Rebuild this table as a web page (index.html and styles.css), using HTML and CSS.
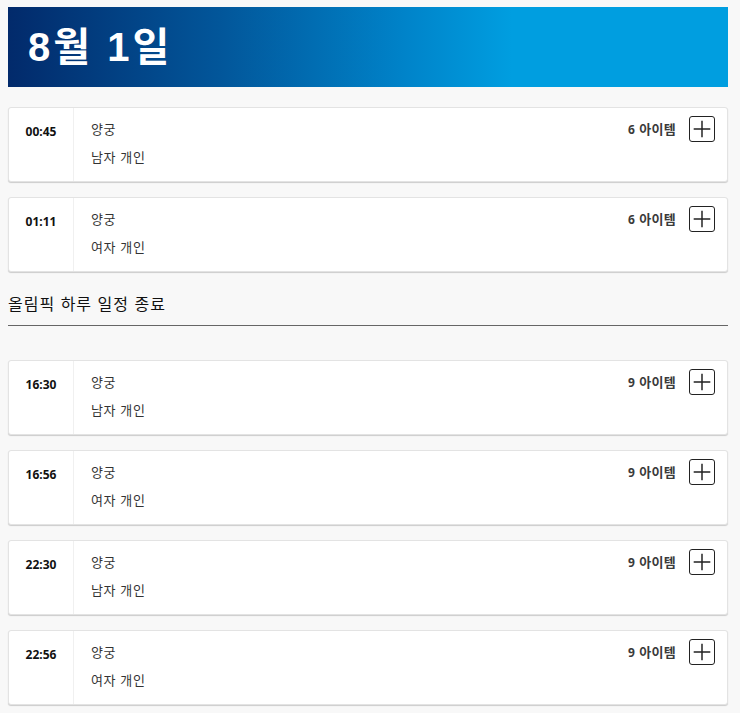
FILE: index.html
```html
<!DOCTYPE html>
<html lang="ko">
<head>
<meta charset="utf-8">
<title>8월 1일</title>
<link rel="stylesheet" href="styles.css">
</head>
<body>
<div class="page">
  <header class="day-header"><h1 class="day-title">8월 1일</h1></header>

  <div class="event">
    <div class="event-time">00:45</div>
    <div class="event-main">
      <div class="event-info">
        <div class="event-sport">양궁</div>
        <div class="event-name">남자 개인</div>
      </div>
      <div class="event-side">
        <span class="event-count"><b>6</b> 아이템</span>
        <button class="event-add" aria-label="추가"><svg viewBox="0 0 26 26" width="24" height="24"><path d="M13 4V22M4 13H22" stroke="#222" stroke-width="1.6" fill="none"/></svg></button>
      </div>
    </div>
  </div>

  <div class="event">
    <div class="event-time">01:11</div>
    <div class="event-main">
      <div class="event-info">
        <div class="event-sport">양궁</div>
        <div class="event-name">여자 개인</div>
      </div>
      <div class="event-side">
        <span class="event-count"><b>6</b> 아이템</span>
        <button class="event-add" aria-label="추가"><svg viewBox="0 0 26 26" width="24" height="24"><path d="M13 4V22M4 13H22" stroke="#222" stroke-width="1.6" fill="none"/></svg></button>
      </div>
    </div>
  </div>

  <div class="day-end">올림픽 하루 일정 종료</div>

  <div class="event">
    <div class="event-time">16:30</div>
    <div class="event-main">
      <div class="event-info">
        <div class="event-sport">양궁</div>
        <div class="event-name">남자 개인</div>
      </div>
      <div class="event-side">
        <span class="event-count"><b>9</b> 아이템</span>
        <button class="event-add" aria-label="추가"><svg viewBox="0 0 26 26" width="24" height="24"><path d="M13 4V22M4 13H22" stroke="#222" stroke-width="1.6" fill="none"/></svg></button>
      </div>
    </div>
  </div>

  <div class="event">
    <div class="event-time">16:56</div>
    <div class="event-main">
      <div class="event-info">
        <div class="event-sport">양궁</div>
        <div class="event-name">여자 개인</div>
      </div>
      <div class="event-side">
        <span class="event-count"><b>9</b> 아이템</span>
        <button class="event-add" aria-label="추가"><svg viewBox="0 0 26 26" width="24" height="24"><path d="M13 4V22M4 13H22" stroke="#222" stroke-width="1.6" fill="none"/></svg></button>
      </div>
    </div>
  </div>

  <div class="event">
    <div class="event-time">22:30</div>
    <div class="event-main">
      <div class="event-info">
        <div class="event-sport">양궁</div>
        <div class="event-name">남자 개인</div>
      </div>
      <div class="event-side">
        <span class="event-count"><b>9</b> 아이템</span>
        <button class="event-add" aria-label="추가"><svg viewBox="0 0 26 26" width="24" height="24"><path d="M13 4V22M4 13H22" stroke="#222" stroke-width="1.6" fill="none"/></svg></button>
      </div>
    </div>
  </div>

  <div class="event">
    <div class="event-time">22:56</div>
    <div class="event-main">
      <div class="event-info">
        <div class="event-sport">양궁</div>
        <div class="event-name">여자 개인</div>
      </div>
      <div class="event-side">
        <span class="event-count"><b>9</b> 아이템</span>
        <button class="event-add" aria-label="추가"><svg viewBox="0 0 26 26" width="24" height="24"><path d="M13 4V22M4 13H22" stroke="#222" stroke-width="1.6" fill="none"/></svg></button>
      </div>
    </div>
  </div>
</div>
</body>
</html>
```
FILE: styles.css
```css
html, body {
  margin: 0;
  padding: 0;
  background: #f8f8f8;
}
body {
  font-family: "Noto Sans", "Noto Sans CJK KR", sans-serif;
  color: #222;
}
.page {
  width: 720px;
  padding: 7px 0 0 8px;
}
.day-header {
  height: 80px;
  background: linear-gradient(90deg, #022a6b 0%, #02579b 30%, #0083c9 55%, #009ee0 70%, #009ee0 100%);
  display: flex;
  align-items: center;
  padding-left: 20px;
  margin-bottom: 20px;
}
.day-title {
  margin: 0;
  color: #fff;
  font-family: "Liberation Sans", "Noto Sans CJK KR", sans-serif;
  font-weight: 700;
  font-size: 40px;
  line-height: 48px;
  letter-spacing: 3px;
}
.event {
  display: flex;
  height: 73px;
  background: #fff;
  border: 1px solid #e3e3e3;
  border-radius: 3px;
  box-shadow: 0 1px 1px rgba(0,0,0,0.18);
  margin-bottom: 15px;
}
.event-time {
  width: 65px;
  flex: none;
  border-right: 1px solid #f0f0f0;
  text-align: center;
  font-family: "Noto Sans", sans-serif;
  font-weight: 700;
  font-size: 12px;
  line-height: 20px;
  padding-top: 14px;
  color: #111;
  box-sizing: border-box;
}
.event-main {
  flex: 1;
  display: flex;
  justify-content: space-between;
  padding: 6px 12px 0 17px;
}
.event-info {
  padding-top: 5px;
}
.event-sport, .event-name {
  font-family: "Noto Sans CJK KR", sans-serif;
  font-size: 13px;
  line-height: 20px;
  color: #333;
  letter-spacing: 0.6px;
}
.event-name {
  margin-top: 8px;
}
.event-side {
  display: flex;
  align-items: flex-start;
  gap: 13px;
}
.event-count {
  font-family: "Noto Sans CJK KR", sans-serif;
  font-size: 13px;
  font-weight: 700;
  color: #3a3a3a;
  line-height: 20px;
  padding-top: 5px;
  letter-spacing: 0.3px;
}
.event-count b {
  font-family: "Noto Sans", sans-serif;
  font-weight: 700;
  font-size: 12px;
}
.event-add {
  width: 26px;
  height: 26px;
  padding: 0;
  margin: 2px 0 0 0;
  border: 1px solid #222;
  border-radius: 3px;
  background: #fff;
  display: flex;
  align-items: center;
  justify-content: center;
}
.day-end {
  font-family: "Noto Sans CJK KR", sans-serif;
  font-size: 16px;
  line-height: 24px;
  color: #111;
  padding: 4px 0 10px;
  border-bottom: 1px solid #666;
  margin-bottom: 34px;
  letter-spacing: 1px;
}
```
